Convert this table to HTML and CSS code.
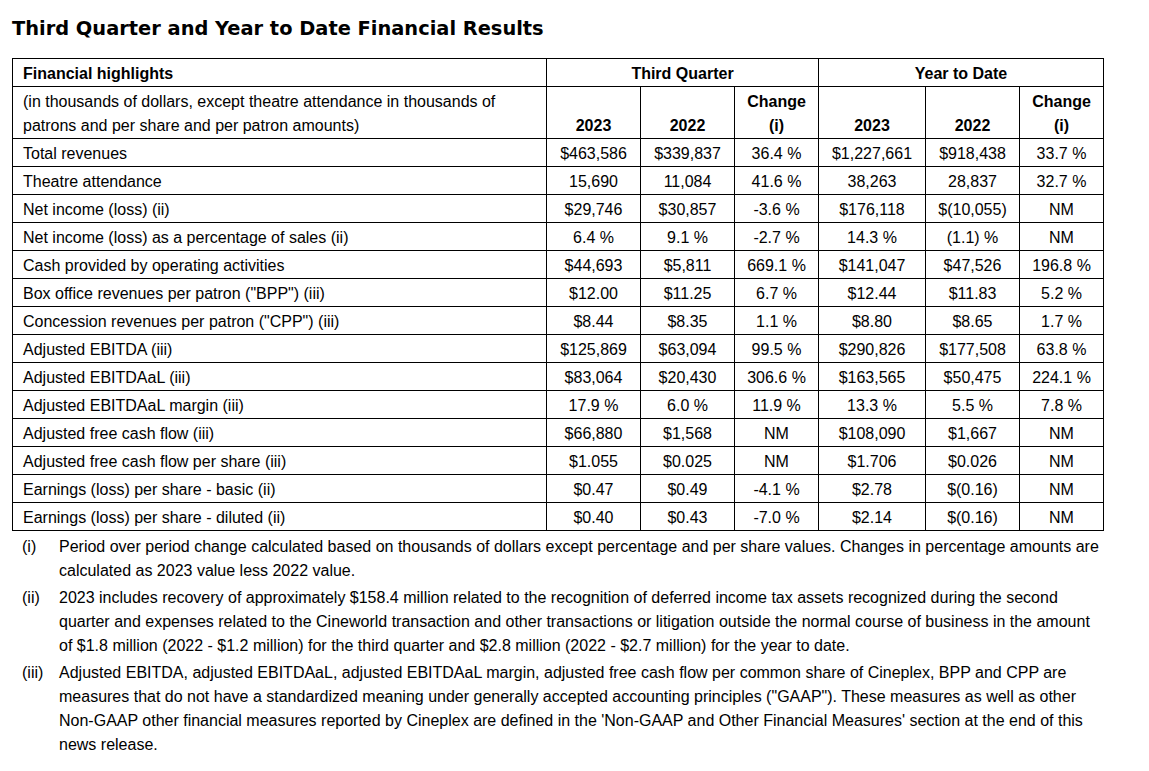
FILE: index.html
```html
<!DOCTYPE html>
<html lang="en">
<head>
<meta charset="utf-8">
<title>Third Quarter and Year to Date Financial Results</title>
<link rel="stylesheet" href="styles.css">
</head>
<body>
<div class="page">
  <h1 class="title">Third Quarter and Year to Date Financial Results</h1>
  <table class="fin">
    <colgroup>
      <col class="c-label">
      <col class="c-num">
      <col class="c-num">
      <col class="c-chg">
      <col class="c-wide">
      <col class="c-num">
      <col class="c-chg">
    </colgroup>
    <thead>
      <tr>
        <th class="lbl">Financial highlights</th>
        <th colspan="3">Third Quarter</th>
        <th colspan="3">Year to Date</th>
      </tr>
      <tr class="sub">
        <td class="lbl">(in thousands of dollars, except theatre attendance in thousands of patrons and per share and per patron amounts)</td>
        <th>2023</th>
        <th>2022</th>
        <th>Change<br>(i)</th>
        <th>2023</th>
        <th>2022</th>
        <th>Change<br>(i)</th>
      </tr>
    </thead>
    <tbody>
      <tr><td class="lbl">Total revenues</td><td>$463,586</td><td>$339,837</td><td>36.4 %</td><td>$1,227,661</td><td>$918,438</td><td>33.7 %</td></tr>
      <tr><td class="lbl">Theatre attendance</td><td>15,690</td><td>11,084</td><td>41.6 %</td><td>38,263</td><td>28,837</td><td>32.7 %</td></tr>
      <tr><td class="lbl">Net income (loss) (ii)</td><td>$29,746</td><td>$30,857</td><td>-3.6 %</td><td>$176,118</td><td>$(10,055)</td><td>NM</td></tr>
      <tr><td class="lbl">Net income (loss) as a percentage of sales (ii)</td><td>6.4 %</td><td>9.1 %</td><td>-2.7 %</td><td>14.3 %</td><td>(1.1) %</td><td>NM</td></tr>
      <tr><td class="lbl">Cash provided by operating activities</td><td>$44,693</td><td>$5,811</td><td>669.1 %</td><td>$141,047</td><td>$47,526</td><td>196.8 %</td></tr>
      <tr><td class="lbl">Box office revenues per patron ("BPP") (iii)</td><td>$12.00</td><td>$11.25</td><td>6.7 %</td><td>$12.44</td><td>$11.83</td><td>5.2 %</td></tr>
      <tr><td class="lbl">Concession revenues per patron ("CPP") (iii)</td><td>$8.44</td><td>$8.35</td><td>1.1 %</td><td>$8.80</td><td>$8.65</td><td>1.7 %</td></tr>
      <tr><td class="lbl">Adjusted EBITDA (iii)</td><td>$125,869</td><td>$63,094</td><td>99.5 %</td><td>$290,826</td><td>$177,508</td><td>63.8 %</td></tr>
      <tr><td class="lbl">Adjusted EBITDAaL (iii)</td><td>$83,064</td><td>$20,430</td><td>306.6 %</td><td>$163,565</td><td>$50,475</td><td>224.1 %</td></tr>
      <tr><td class="lbl">Adjusted EBITDAaL margin (iii)</td><td>17.9 %</td><td>6.0 %</td><td>11.9 %</td><td>13.3 %</td><td>5.5 %</td><td>7.8 %</td></tr>
      <tr><td class="lbl">Adjusted free cash flow (iii)</td><td>$66,880</td><td>$1,568</td><td>NM</td><td>$108,090</td><td>$1,667</td><td>NM</td></tr>
      <tr><td class="lbl">Adjusted free cash flow per share (iii)</td><td>$1.055</td><td>$0.025</td><td>NM</td><td>$1.706</td><td>$0.026</td><td>NM</td></tr>
      <tr><td class="lbl">Earnings (loss) per share - basic (ii)</td><td>$0.47</td><td>$0.49</td><td>-4.1 %</td><td>$2.78</td><td>$(0.16)</td><td>NM</td></tr>
      <tr><td class="lbl">Earnings (loss) per share - diluted (ii)</td><td>$0.40</td><td>$0.43</td><td>-7.0 %</td><td>$2.14</td><td>$(0.16)</td><td>NM</td></tr>
    </tbody>
  </table>
  <div class="notes">
    <div class="note">
      <span class="mark">(i)</span>
      <p class="text">Period over period change calculated based on thousands of dollars except percentage and per share values. Changes in percentage amounts are calculated as 2023 value less 2022 value.</p>
    </div>
    <div class="note">
      <span class="mark">(ii)</span>
      <p class="text">2023 includes recovery of approximately $158.4 million related to the recognition of deferred income tax assets recognized during the second quarter and expenses related to the Cineworld transaction and other transactions or litigation outside the normal course of business in the amount of $1.8 million (2022 - $1.2 million) for the third quarter and $2.8 million (2022 - $2.7 million) for the year to date.</p>
    </div>
    <div class="note">
      <span class="mark">(iii)</span>
      <p class="text">Adjusted EBITDA, adjusted EBITDAaL, adjusted EBITDAaL margin, adjusted free cash flow per common share of Cineplex, BPP and CPP are measures that do not have a standardized meaning under generally accepted accounting principles ("GAAP"). These measures as well as other Non-GAAP other financial measures reported by Cineplex are defined in the 'Non-GAAP and Other Financial Measures' section at the end of this news release.</p>
    </div>
  </div>
</div>
</body>
</html>
```
FILE: styles.css
```css
html, body {
  margin: 0;
  padding: 0;
  background: #fff;
}
.page {
  padding: 17px 12px 0 12px;
  color: #000;
  font-family: "Liberation Sans", Arial, sans-serif;
  font-size: 16px;
}
.title {
  font-family: "DejaVu Sans", Verdana, sans-serif;
  font-weight: bold;
  font-size: 19.4px;
  line-height: 24px;
  margin: 0 0 17px 0;
}
.fin {
  border-collapse: collapse;
  width: 1092px;
  table-layout: fixed;
}
.c-label { width: 534px; }
.c-num { width: 94px; }
.c-chg { width: 84px; }
.c-wide { width: 107px; }
.fin th,
.fin td {
  border: 1px solid #000;
  padding: 3px 4px 0 4px;
  line-height: 24px;
  text-align: center;
  vertical-align: bottom;
  font-size: 16px;
}
.fin th { font-weight: bold; }
.fin .lbl {
  text-align: left;
  padding-left: 10px;
}
.fin th.lbl { font-weight: bold; }
.fin td.lbl { font-weight: normal; }
.sub td.lbl { vertical-align: top; }
.notes {
  padding: 4px 0 0 10px;
  width: 1082px;
}
.note {
  display: grid;
  grid-template-columns: 37px 1fr;
  line-height: 24px;
  margin-bottom: 3px;
}
.mark { display: block; }
.text { margin: 0; }
```
